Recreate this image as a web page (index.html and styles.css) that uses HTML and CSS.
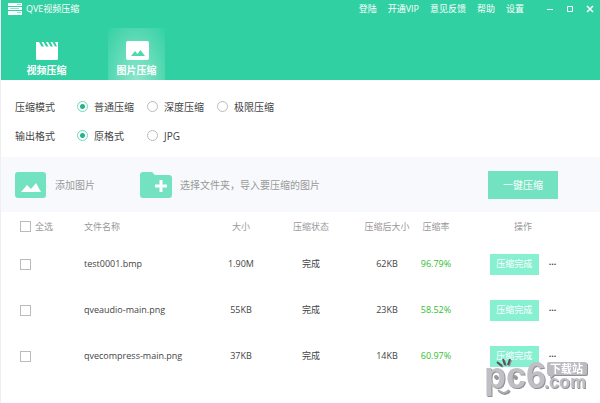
FILE: index.html
```html
<!DOCTYPE html>
<html lang="zh-CN">

<head>
	<meta charset="utf-8">
	<meta name="viewport" content="width=device-width, initial-scale=1">
	<title>QVE视频压缩</title>
	<link rel="stylesheet" href="styles.css">
</head>

<body>
	<header class="header">
		<div class="titlebar">
			<svg class="logo" viewBox="0 0 14 12">
				<path fill="#fff" d="M0 0h14v3H0zM0 4h14v3H0zM0 8h14v4H0z" />
				<path stroke="#8fe3cb" d="M9 1.5h4M2 5.5h9M9 9.5h4" />
			</svg>
			<span class="title">QVE视频压缩</span>
			<nav class="menu">
				<a href="#">登陆</a>
				<a href="#">开通VIP</a>
				<a href="#">意见反馈</a>
				<a href="#">帮助</a>
				<a href="#">设置</a>
			</nav>
			<div class="window-btns">
				<button aria-label="最小化"><svg viewBox="0 0 8 8"><path d="M1 4.5h6" /></svg></button>
				<button aria-label="最大化"><svg viewBox="0 0 8 8"><path d="M1.5 1.5h5v5h-5z" /></svg></button>
				<button aria-label="关闭"><svg viewBox="0 0 8 8"><path d="M1 1l6 6M7 1L1 7" stroke-width="1.5" /></svg></button>
			</div>
		</div>
		<nav class="tabs">
			<a class="tab" href="#">
				<svg viewBox="0 0 24 20">
					<path fill="#fff" d="M1 1h3l2.500 4.500h2.500L6.500 1h2L11 5.500h2.500L11 1h2l2.500 4.500H18L15.500 1h2L20 5.500h2L20 1h3v16.500a1.500 1.500 0 0 1-1.500 1.500h-19A1.500 1.500 0 0 1 1 17.500z" />
				</svg>
				视频压缩
			</a>
			<a class="tab active" href="#">
				<svg viewBox="0 0 24 20">
					<rect x="1" y="0" width="23" height="19" rx="2" fill="#fff" />
					<path fill="#4fd8b0" d="M6 15l4-5 2.500 3L15.500 9l4.500 6z" />
				</svg>
				图片压缩
			</a>
		</nav>
	</header>

	<form class="options">
		<div class="option-row">
			<span class="option-name">压缩模式</span>
			<label><input type="radio" name="mode" checked>普通压缩</label>
			<label><input type="radio" name="mode">深度压缩</label>
			<label><input type="radio" name="mode">极限压缩</label>
		</div>
		<div class="option-row">
			<span class="option-name">输出格式</span>
			<label><input type="radio" name="format" checked>原格式</label>
			<label><input type="radio" name="format">JPG</label>
		</div>
	</form>

	<div class="toolbar">
		<button class="add add-image">
			<svg viewBox="0 0 32 28">
				<rect y="1" width="31" height="26" rx="3" fill="#72e2c0" />
				<path fill="#fff" d="M6 21l6-7 4 4 5-6 5 9z" />
			</svg>
			添加图片
		</button>
		<button class="add">
			<svg viewBox="0 0 32 28">
				<path fill="#72e2c0" d="M3 1h9l3 3h14a3 3 0 0 1 3 3v17a3 3 0 0 1-3 3H3a3 3 0 0 1-3-3V4a3 3 0 0 1 3-3z" />
				<path stroke="#fff" stroke-width="3" d="M21 9v12M15 15h12" />
			</svg>
			选择文件夹，导入要压缩的图片
		</button>
		<button class="start">一键压缩</button>
	</div>

	<table class="files">
		<colgroup>
			<col class="col-check">
			<col>
			<col class="col-size">
			<col class="col-state">
			<col class="col-after">
			<col class="col-rate">
			<col class="col-action">
		</colgroup>
		<thead>
			<tr>
				<th class="check"><label><input type="checkbox">全选</label></th>
				<th class="name">文件名称</th>
				<th>大小</th>
				<th>压缩状态</th>
				<th>压缩后大小</th>
				<th>压缩率</th>
				<th class="action">操作</th>
			</tr>
		</thead>
		<tbody>
			<tr>
				<td class="check"><input type="checkbox" aria-label="test0001.bmp"></td>
				<td class="name">test0001.bmp</td>
				<td>1.90M</td>
				<td>完成</td>
				<td>62KB</td>
				<td class="rate">96.79%</td>
				<td class="action"><button class="done">压缩完成</button><button class="more">···</button></td>
			</tr>
			<tr>
				<td class="check"><input type="checkbox" aria-label="qveaudio-main.png"></td>
				<td class="name">qveaudio-main.png</td>
				<td>55KB</td>
				<td>完成</td>
				<td>23KB</td>
				<td class="rate">58.52%</td>
				<td class="action"><button class="done">压缩完成</button><button class="more">···</button></td>
			</tr>
			<tr>
				<td class="check"><input type="checkbox" aria-label="qvecompress-main.png"></td>
				<td class="name">qvecompress-main.png</td>
				<td>37KB</td>
				<td>完成</td>
				<td>14KB</td>
				<td class="rate">60.97%</td>
				<td class="action"><button class="done">压缩完成</button><button class="more">···</button></td>
			</tr>
		</tbody>
	</table>

	<svg class="watermark" viewBox="0 0 104 46">
		<text class="wm-big" x="0" y="31">pc6</text>
		<!-- hair, eyes and smile of the face -->
		<path d="M13 5l5 4M19 2l2 6M26 2l-2 6" stroke="#555" stroke-width="2" fill="none" />
		<circle cx="12" cy="20" r="2" fill="#999" />
		<circle cx="31" cy="20" r="2" fill="#999" />
		<path d="M14 33q6 6 11 0" stroke="#aaa" stroke-width="2" fill="none" />
		<path d="M65 5h36a2 2 0 0 1 2 2v9a2 2 0 0 1-2 2H70l-4 4v-4h-1a2 2 0 0 1-2-2V7a2 2 0 0 1 2-2z" fill="#bcbcc0" />
		<text class="wm-cn" x="66" y="16">下载站</text>
		<text class="wm-com" x="60" y="31">.com</text>
	</svg>
</body>

</html>
```

FILE: styles.css
```css
* {
	box-sizing: border-box;
}

body {
	position: relative;
	margin: 0;
	min-height: 100vh;
	background: #fff;
	border-left: 1px solid #eef0f0;
	font-family: "Open Sans", "Noto Sans CJK SC", sans-serif;
	font-size: 10px;
	line-height: 14px;
	color: #555;
}

a {
	color: inherit;
	text-decoration: none;
}

button {
	padding: 0;
	border: none;
	background: none;
	font: inherit;
	color: inherit;
	cursor: pointer;
}

svg {
	display: block;
}

/* header */
.header {
	height: 80px;
	background: #30d0a2;
	color: #fff;
}

.titlebar {
	display: flex;
	align-items: center;
	height: 18px;
	padding: 0 6px 0 7px;
	font-size: 9px;
}

.logo {
	width: 14px;
	height: 12px;
	margin-right: 4px;
}

.menu {
	display: flex;
	gap: 11px;
	margin-left: auto;
}

.window-btns {
	display: flex;
	gap: 12px;
	margin-left: 22px;
}

.window-btns svg {
	width: 8px;
	height: 8px;
	fill: none;
	stroke: #fff;
}

.tabs {
	display: flex;
	gap: 33px;
	padding: 10px 0 0 17px;
}

.tab {
	display: flex;
	flex-direction: column;
	align-items: center;
	gap: 2px;
	width: 57px;
	height: 52px;
	padding-top: 13px;
	font-weight: bold;
}

.tab svg {
	width: 24px;
	height: 20px;
}

.tab.active {
	background: radial-gradient(ellipse at 50% 100%, #8ce6cb 0%, #62dbb8 50%, #34d1a4 100%);
}

/* options */
.options {
	padding: 12px 0 7px 14px;
}

.option-row {
	display: flex;
	align-items: center;
	height: 29px;
	color: #444;
}

.option-name {
	width: 62px;
}

.option-row label {
	display: flex;
	align-items: center;
	gap: 6px;
	width: 70px;
}

input {
	appearance: none;
	flex: none;
	width: 11px;
	height: 11px;
	margin: 0;
	border: 1px solid #bbb;
	background: #fff;
}

input[type="radio"] {
	border-radius: 50%;
}

input[type="radio"]:checked {
	border-color: #6fd9bb;
	background: radial-gradient(circle, #25b48b 0 2px, #fff 3px);
}

/* toolbar */
.toolbar {
	display: flex;
	align-items: center;
	height: 55px;
	padding: 0 42px 0 14px;
	background: #f7f9fc;
	color: #999;
}

.add {
	display: flex;
	align-items: center;
	gap: 8px;
}

.add svg {
	width: 32px;
	height: 28px;
}

.add-image {
	width: 125px;
}

.start {
	width: 70px;
	height: 28px;
	margin-left: auto;
	background: #72e2c0;
	color: #fff;
}

/* file list */
.files {
	width: 100%;
	table-layout: fixed;
	border-collapse: collapse;
	font-size: 9px;
	text-align: center;
}

.col-check {
	width: 83px;
}

.col-size {
	width: 38px;
}

.col-state {
	width: 102px;
}

.col-after {
	width: 50px;
}

.col-rate {
	width: 48px;
}

.col-action {
	width: 140px;
}

.files th {
	height: 29px;
	padding: 0;
	font-weight: normal;
	color: #999;
}

.files td {
	height: 46px;
	padding: 0;
	color: #444;
}

.files .check {
	padding-left: 19px;
	text-align: left;
}

.files .name {
	text-align: left;
}

.check label {
	display: flex;
	align-items: center;
	gap: 4px;
}

.check input {
	display: block;
}

.files .rate {
	color: #2fc02f;
}

.files .action {
	padding-right: 14px;
}

.done {
	width: 49px;
	height: 21px;
	background: #86f0d0;
	color: #fff;
}

.more {
	margin-left: 10px;
	font-weight: bold;
}

.watermark {
	position: absolute;
	right: 12px;
	bottom: 0;
	width: 104px;
	height: 46px;
	pointer-events: none;
	font-family: "Liberation Sans", "Noto Sans CJK SC", sans-serif;
	font-weight: bold;
	fill: #c0c0c4;
	filter: drop-shadow(1px 1px 0 #909096);
}

.wm-big {
	font-size: 36px;
}

.wm-com {
	font-size: 18px;
}

.wm-cn {
	font-size: 11px;
	fill: #fff;
}
```
